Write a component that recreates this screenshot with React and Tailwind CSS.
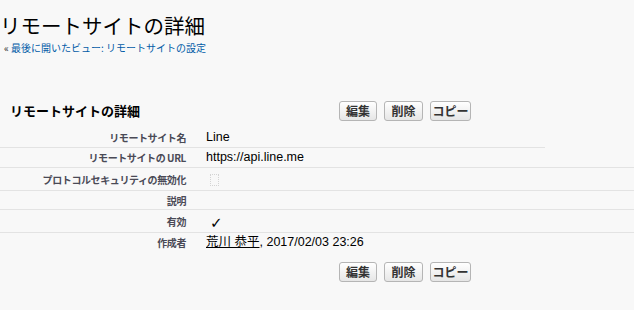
import React from "react";

const jp = "font-['Noto_Sans_CJK_JP',sans-serif]";
const mixed = "font-['Liberation_Sans','Noto_Sans_CJK_JP',sans-serif]";

function Btn({ children, w }) {
  return (
    <button className={`${w} h-[20px] rounded-[3px] border border-[#b5b5b5] bg-gradient-to-b from-white to-[#e6e6e6] text-[12px] font-bold text-[#333] leading-none ${jp}`}>
      {children}
    </button>
  );
}

function Buttons() {
  return (
    <div className="flex gap-[7px]">
      <Btn w="w-[38px]">編集</Btn>
      <Btn w="w-[39px]">削除</Btn>
      <Btn w="w-[41px]">コピー</Btn>
    </div>
  );
}

const rows = [
  { label: "リモートサイト名", value: "Line", h: "h-[20px]" },
  { label: "リモートサイトの URL", value: "https://api.line.me", h: "h-[20px]" },
  { label: "プロトコルセキュリティの無効化", value: "box", h: "h-[23px]" },
  { label: "説明", value: "", h: "h-[19px]" },
  { label: "有効", value: "check", h: "h-[23px]" },
  { label: "作成者", value: "owner", h: "h-[19px]", last: true },
];

function Value({ v }) {
  if (v === "box") {
    return <span className="ml-[4px] mt-[2px] block w-[9px] h-[12px] border border-dotted border-[#d4d4d4]" />;
  }
  if (v === "check") {
    return <span className="ml-[4px] mt-[4px] text-[15px] leading-none text-black font-['DejaVu_Sans',sans-serif]">✓</span>;
  }
  if (v === "owner") {
    return (
      <span className={`text-[12.5px] text-black ${mixed}`}>
        <span className="underline">荒川 恭平</span>, 2017/02/03 23:26
      </span>
    );
  }
  return <span className={`text-[12.5px] text-black ${mixed}`}>{v}</span>;
}

export default function App() {
  return (
    <div className={`w-[634px] h-[310px] bg-[#f8f8f8] overflow-hidden ${jp}`}>
      <h1 className="pt-[10px] text-[20.5px] leading-[30px] text-black font-normal whitespace-nowrap">リモートサイトの詳細</h1>
      <div className="pl-[4px] pt-[1px] text-[10px] leading-[14px] text-[#015ba7] whitespace-nowrap">
        <span className="text-[#333]">«</span> 最後に開いたビュー: リモートサイトの設定
      </div>

      <div className="mt-[44px] flex items-center h-[24px]">
        <div className="w-[339px] pl-[10px] text-[13px] font-bold text-black whitespace-nowrap">リモートサイトの詳細</div>
        <Buttons />
      </div>

      <div className="mt-[5px]">
        {rows.map((r, i) => (
          <div key={r.label} className={`flex items-center ${r.h} ${r.last ? "" : "border-b border-[#e3e3e3]"} ${i === 0 ? "w-[545px]" : "w-full"}`}>
            <div className="w-[186px] text-right text-[10px] font-bold text-[#4a4a56] whitespace-nowrap tracking-[-0.4px]">{r.label}</div>
            <div className="pl-[20px] flex items-center"><Value v={r.value} /></div>
          </div>
        ))}
      </div>

      <div className="mt-[10px] pl-[339px]">
        <Buttons />
      </div>
    </div>
  );
}
